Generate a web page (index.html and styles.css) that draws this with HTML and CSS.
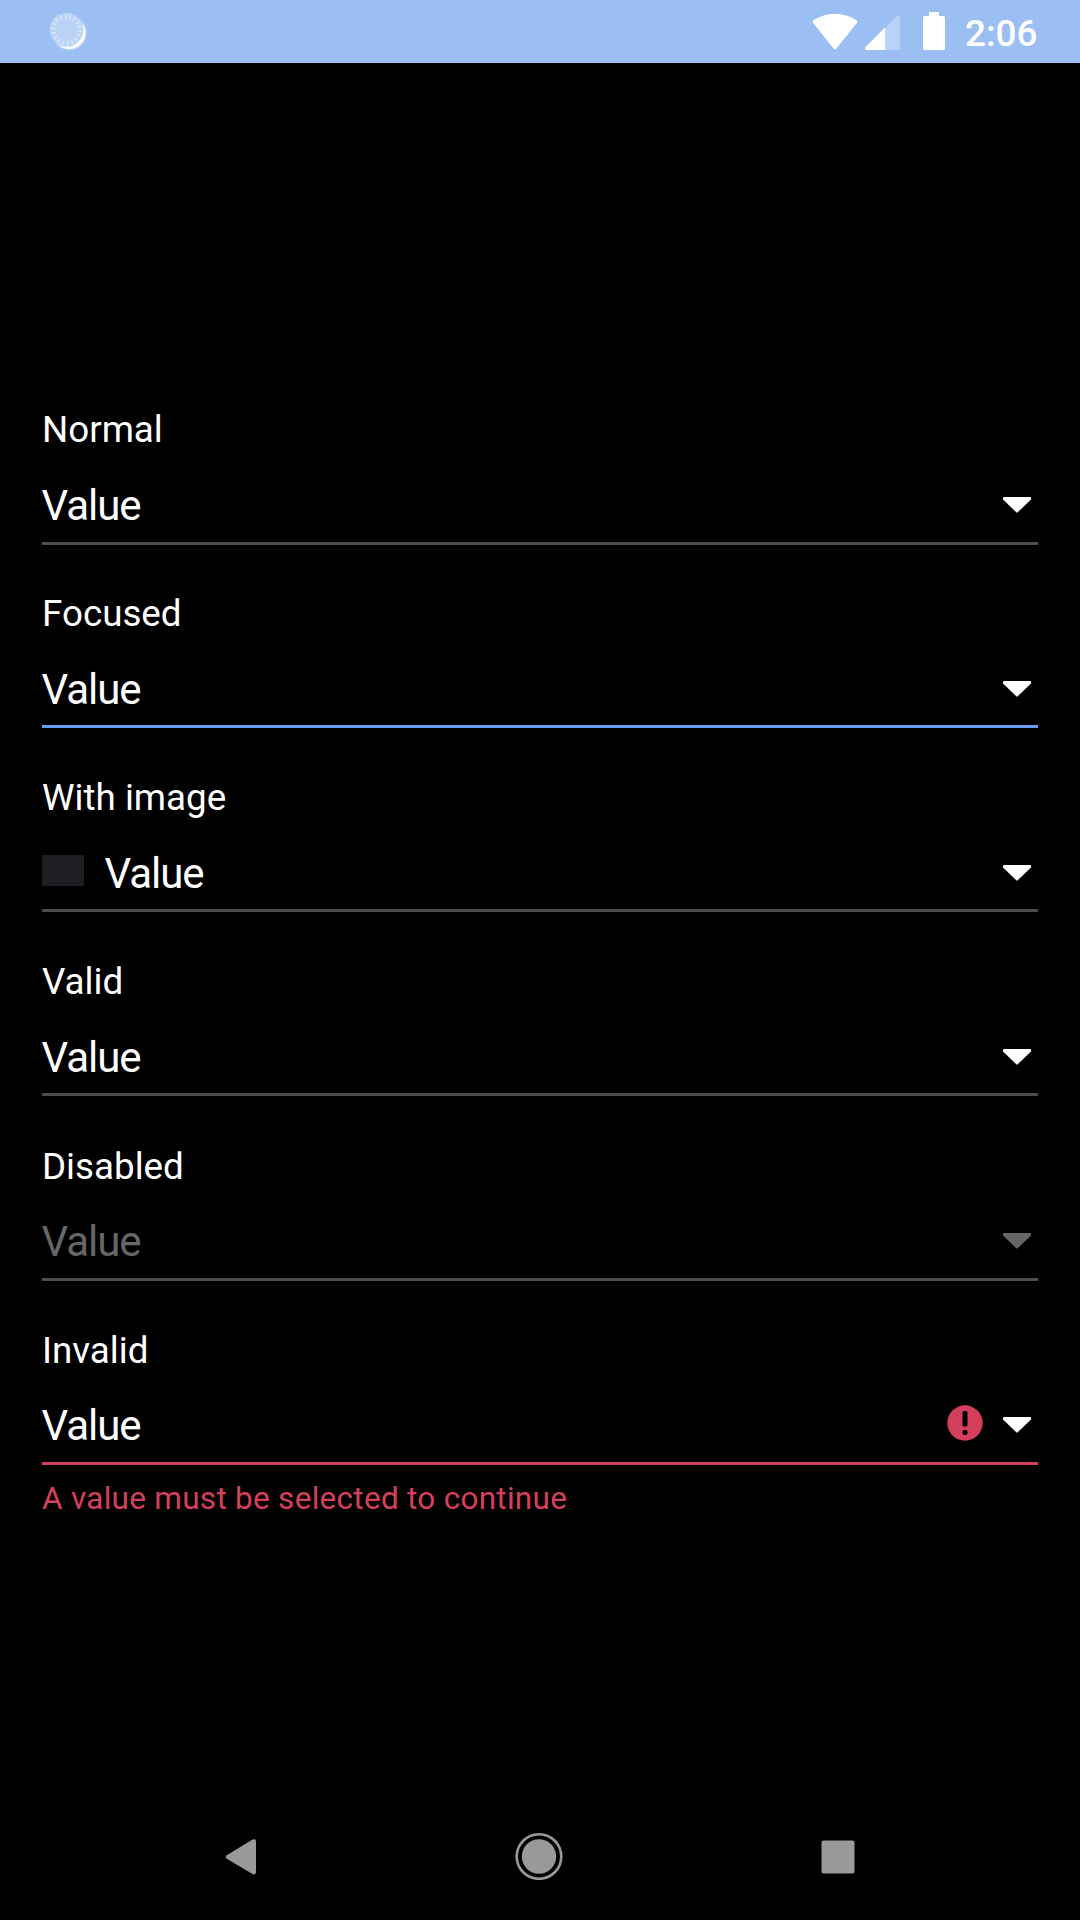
FILE: index.html
```html
<!DOCTYPE html>
<html lang="en">
<head>
<meta charset="utf-8">
<title>Select fields</title>
<link rel="stylesheet" href="styles.css">
</head>
<body>
<svg class="defs" width="0" height="0" aria-hidden="true">
  <symbol id="caret" viewBox="0 0 28 16"><path d="M1 0H27Q28 0 28 1V2.500L14.700 15.300Q14 16 13.300 15.300L0 2.500V1Q0 0 1 0Z"/></symbol>
</svg>
<div class="screen">
  <header class="status">
    <svg class="sync" width="40" height="40" viewBox="0 0 40 40">
      <circle cx="20.200" cy="20.700" r="16.300" fill="#fff"/>
      <circle cx="20.500" cy="21" r="17.500" fill="#fff" opacity=".25"/>
      <circle cx="17.500" cy="17.800" r="17" fill="#bad2f6"/>
      <circle cx="17.500" cy="17.800" r="13.200" fill="none" stroke="#d3e2f9" stroke-width="5" stroke-dasharray="2 2.607"/>
    </svg>
    <div class="indicators">
      <svg class="wifi" width="46" height="38" viewBox="0 0 46 38"><path d="M1.300 7.300C14-1.400 32-1.400 44.700 7.300Q46 8.500 44.800 10L24.700 35.300Q23 37.500 21.300 35.300L1.200 10Q0 8.500 1.300 7.300Z" fill="#fff"/></svg>
      <svg class="signal" width="35" height="35" viewBox="0 0 35 35"><path d="M20 13.500L32.200 .800Q35-1 35 2V33Q35 35 33 35H20Z" fill="#bad2f6"/><path d="M20 12.500V35H1.500Q-.8 34.500 .5 32Z" fill="#fff"/></svg>
      <svg class="battery" width="22" height="38" viewBox="0 0 22 38"><path d="M6 0H16V4H20.500Q22 4 22 5.500V36.500Q22 38 20.500 38H1.500Q0 38 0 36.500V5.500Q0 4 1.500 4H6Z" fill="#fff"/></svg>
      <span class="clock">2:06</span>
    </div>
  </header>
  <main class="form">
    <section class="field">
      <div class="label">Normal</div>
      <div class="select"><span class="value">Value</span><svg class="caret"><use href="#caret"/></svg></div>
    </section>
    <section class="field compact focused">
      <div class="label">Focused</div>
      <div class="select"><span class="value">Value</span><svg class="caret"><use href="#caret"/></svg></div>
    </section>
    <section class="field compact">
      <div class="label">With image</div>
      <div class="select"><span class="thumb"></span><span class="value">Value</span><svg class="caret"><use href="#caret"/></svg></div>
    </section>
    <section class="field compact">
      <div class="label">Valid</div>
      <div class="select"><span class="value">Value</span><svg class="caret"><use href="#caret"/></svg></div>
    </section>
    <section class="field disabled">
      <div class="label">Disabled</div>
      <div class="select"><span class="value">Value</span><svg class="caret"><use href="#caret"/></svg></div>
    </section>
    <section class="field invalid">
      <div class="label">Invalid</div>
      <div class="select"><span class="value">Value</span>
        <svg class="alert" width="36" height="36" viewBox="0 0 36 36"><circle cx="18" cy="18" r="17.700" fill="#d4405c"/><rect x="15.500" y="6" width="5" height="15.500" rx="1.500" fill="#000"/><rect x="15.500" y="25" width="5" height="5" rx="1.700" fill="#000"/></svg>
        <svg class="caret"><use href="#caret"/></svg></div>
      <div class="message">A value must be selected to continue</div>
    </section>
  </main>
  <nav class="nav">
    <svg class="back" width="32" height="38" viewBox="0 0 32 38"><path d="M27.500 1.600Q31 .2 31 3.500V34Q31 37.500 27.500 36L1.800 20.700Q-.4 19 1.800 17.200Z" fill="#999"/></svg>
    <svg class="home" width="48" height="48" viewBox="0 0 48 48"><circle cx="24" cy="24.500" r="22.300" fill="none" stroke="#999" stroke-width="2.600"/><circle cx="24" cy="24.500" r="17.200" fill="#999"/></svg>
    <svg class="recent" width="34" height="34" viewBox="0 0 34 34"><rect x=".5" y=".5" width="33" height="33" rx="2" fill="#999"/></svg>
  </nav>
</div>
</body>
</html>
```
FILE: styles.css
```css
* { box-sizing: border-box; }
body { margin: 0; background: #000; }
.defs { position: absolute; }
svg { display: block; flex: none; }
.screen {
  width: 1080px;
  height: 1920px;
  display: flex;
  flex-direction: column;
  background: #000;
  color: #fff;
  font-family: Roboto, sans-serif;
  overflow: hidden;
}
.status {
  height: 63px;
  flex: none;
  display: flex;
  justify-content: space-between;
  align-items: flex-start;
  padding: 0 42px 0 49px;
  background: #9bbef3;
}
.sync { margin-top: 12px; }
.indicators { display: flex; align-items: flex-start; }
.wifi { margin: 13px 7px 0 0; }
.signal { margin: 15px 23px 0 0; }
.battery { margin: 12px 20px 0 0; }
.clock {
  width: 73px;
  margin-top: 12px;
  font-size: 36.75px;
  line-height: 44px;
  font-weight: 500;
  white-space: nowrap;
}
.form { flex: 1; padding: 345px 42px 0; }
.field { height: 184px; }
.label {
  height: 44px;
  font-size: 36.75px;
  line-height: 44px;
}
.disabled .label,
.invalid .label { line-height: 46px; }
.select {
  height: 93px;
  padding-top: 27px;
  display: flex;
  align-items: flex-start;
  border-bottom: 3px solid #4d4d4d;
}
.compact .select { height: 92px; }
.value {
  flex: 1;
  margin: 2px 0 0 -.5px;
  font-size: 42px;
  line-height: 50px;
  letter-spacing: -1.05px;
}
.caret { width: 28px; height: 16px; margin: 18px 7px 0 0; fill: #fff; }
.thumb { width: 42px; height: 31px; margin: 8px 21px 0 0; background: #1f1d22; }
.alert { margin: 6px 20px 0 0; }
.focused .select { border-color: #699df3; }
.disabled .value { color: #666; }
.disabled .caret { fill: #666; }
.invalid .select { border-color: #d4405c; }
.message {
  margin-top: 15px;
  font-size: 31.5px;
  line-height: 38px;
  letter-spacing: .28px;
  color: #d4405c;
  white-space: nowrap;
}
.nav {
  height: 126px;
  flex: none;
  display: flex;
  align-items: flex-start;
  padding-left: 225px;
}
.back { margin: 44px 258px 0 0; }
.home { margin: 38px 258px 0 0; }
.recent { margin-top: 46px; }
```
